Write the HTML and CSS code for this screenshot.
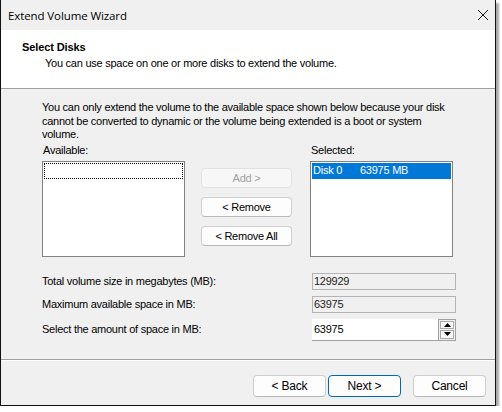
FILE: index.html
```html
<!DOCTYPE html>
<html>
<head>
<meta charset="utf-8">
<link rel="stylesheet" href="styles.css">
</head>
<body>
<div class="window">
  <div class="titlebar">
    <span class="title">Extend Volume Wizard</span>
    <svg class="close" width="12" height="12" viewBox="0 0 12 12"><path d="M1 1 L11 11 M11 1 L1 11" stroke="#1a1a1a" stroke-width="1" fill="none"/></svg>
  </div>
  <div class="header">
    <div class="h-title">Select Disks</div>
    <div class="h-sub">You can use space on one or more disks to extend the volume.</div>
  </div>
  <div class="body">
    <p class="info">You can only extend the volume to the available space shown below because your disk cannot be converted to dynamic or the volume being extended is a boot or system volume.</p>
    <div class="lists">
      <div class="col">
        <div class="lbl">Available:</div>
        <div class="listbox"><div class="focus"></div></div>
      </div>
      <div class="btncol">
        <div class="btn disabled">Add &gt;</div>
        <div class="btn">&lt; Remove</div>
        <div class="btn">&lt; Remove All</div>
      </div>
      <div class="col">
        <div class="lbl">Selected:</div>
        <div class="listbox"><div class="item"><span class="disk">Disk 0</span><span>63975 MB</span></div></div>
      </div>
    </div>
    <div class="fields">
      <div class="frow"><span class="flbl">Total volume size in megabytes (MB):</span><div class="ro">129929</div></div>
      <div class="frow"><span class="flbl">Maximum available space in MB:</span><div class="ro">63975</div></div>
      <div class="frow spinrow"><span class="flbl">Select the amount of space in MB:</span>
        <div class="spin"><div class="spinval">63975</div>
          <div class="spinbtns">
            <div class="sb"><svg width="7" height="4" viewBox="0 0 7 4"><path d="M3.5 0 L7 4 L0 4 Z" fill="#000"/></svg></div>
            <div class="sb"><svg width="7" height="4" viewBox="0 0 7 4"><path d="M0 0 L7 0 L3.5 4 Z" fill="#000"/></svg></div>
          </div>
        </div>
      </div>
    </div>
  </div>
  <div class="footer">
    <div class="fbtn">&lt; Back</div>
    <div class="fbtn primary">Next &gt;</div>
    <div class="fbtn cancel">Cancel</div>
  </div>
</div>
</body>
</html>
```

FILE: styles.css
```css
* { box-sizing: border-box; }
html, body { margin: 0; padding: 0; background: #fff; }
body { font-family: "Liberation Sans", Arial, sans-serif; font-size: 11px; letter-spacing: -0.25px; color: #000; }

.window {
  width: 496px;
  height: 406px;
  border: 1px solid #111;
  border-top: 0;
  box-shadow: 3px 3px 2px #a8a8a8;
  display: flex;
  flex-direction: column;
  background: #f0f0f0;
}

.titlebar {
  height: 30px;
  background: #f0f0f0;
  display: flex;
  align-items: center;
  justify-content: space-between;
  padding: 0 6px 0 7px;
}
.title { font-family: "Open Sans", "Noto Sans", sans-serif; font-size: 11.5px; color: #000; letter-spacing: -0.1px; }

.header {
  height: 59px;
  background: #fff;
  border-bottom: 1px solid #a0a0a0;
  padding: 11px 0 0 21px;
}
.h-title { font-weight: bold; font-size: 11px; line-height: 13px; letter-spacing: -0.1px; }
.h-sub { margin: 3px 0 0 23px; line-height: 13px; }

.body {
  flex: 1;
  padding: 12px 0 0 41px;
  border-bottom: 1px solid #a0a0a0;
}
.info { margin: 0; width: 418px; line-height: 13.5px; }

.lists { display: flex; margin-top: 2px; }
.col { display: flex; flex-direction: column; width: 143px; }
.lbl { line-height: 13px; height: 17px; padding-left: 1px; }
.listbox {
  height: 96px;
  background: #fff;
  border: 1px solid #828282;
  padding: 1px;
}
.focus { height: 16px; border: 1px dotted #000; }
.item { height: 16px; background: #0078d7; color: #fff; line-height: 15px; padding-left: 1px; display: flex; }
.disk { width: 47px; }

.btncol { display: flex; flex-direction: column; gap: 9px; width: 91px; margin: 24px 18px 0 16px; }
.btn {
  height: 20px;
  border: 1px solid #cfcfcf;
  border-bottom-color: #b8b8b8;
  border-radius: 4px;
  background: #fdfdfd;
  text-align: center;
  line-height: 18px;
}
.btn.disabled { color: #a0a0a0; border-color: #e2e2e2; background: #f7f7f7; }

.fields { display: flex; flex-direction: column; margin-top: 16px; }
.frow { display: flex; align-items: center; justify-content: space-between; width: 414px; height: 17px; margin-bottom: 6px; }
.flbl { line-height: 13px; }
.ro {
  width: 144px; height: 17px;
  border: 1px solid #b4b4b4;
  background: #f0f0f0;
  line-height: 15px;
  padding-left: 1px;
  color: #222;
}
.spinrow { height: 22px; }
.spin { width: 144px; height: 22px; display: flex; background: #fff; border-bottom: 1px solid #a0a0a0; }
.spinval { flex: 1; line-height: 20px; padding-left: 2px; }
.spinbtns { width: 18px; display: flex; flex-direction: column; border: 1px solid #a0a0a0; border-bottom: 0; background: #f0f0f0; padding: 1px; gap: 1px; }
.sb { flex: 1; border: 1px solid #a8a8a8; background: #f8f8f8; display: flex; align-items: center; justify-content: center; }

.footer {
  height: 45px;
  border-top: 1px solid #fff;
  display: flex;
  padding: 14px 0 0 252px;
}
.fbtn {
  width: 73px; height: 22px;
  border: 1px solid #cfcfcf;
  border-bottom-color: #b8b8b8;
  border-radius: 4px;
  background: #fdfdfd;
  text-align: center;
  line-height: 20px;
  font-size: 12px;
  letter-spacing: -0.2px;
  margin-right: 2px;
}
.fbtn.primary { border: 1px solid #0067c0; margin-right: 12px; }
```
